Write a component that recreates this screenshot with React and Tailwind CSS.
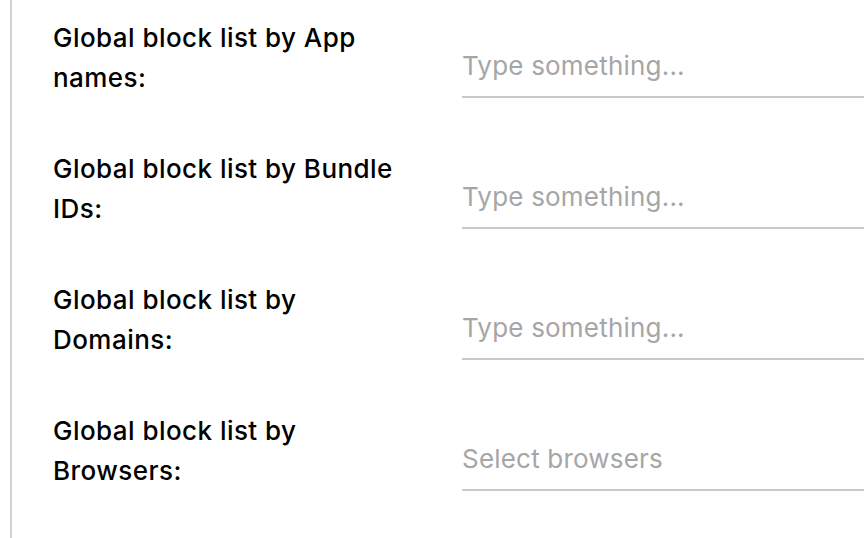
import { useState } from 'react'

const FIELDS = [
  { id: 'app_names', label: 'Global block list by App names:', placeholder: 'Type something...' },
  { id: 'bundle_ids', label: 'Global block list by Bundle IDs:', placeholder: 'Type something...' },
  { id: 'domains', label: 'Global block list by Domains:', placeholder: 'Type something...' },
  { id: 'browsers', label: 'Global block list by Browsers:', placeholder: 'Select browsers' }
]

const App = () => {
  const [values, setValues] = useState({})

  const handleChange = (e) => {
    const { name, value } = e.target
    setValues((prev) => ({ ...prev, [name]: value }))
  }

  return (
    <div className="min-h-screen bg-white overflow-hidden" style={{ fontFamily: 'Inter, "Noto Sans", sans-serif' }}>
      <div className="ml-[10px] border-l-2 border-[#d2d2d2] min-h-[538px] pl-[41px] pt-[18px] flex flex-col gap-[51px]">
        {FIELDS.map((field) => (
          <div key={field.id} className="flex items-end">
            <label htmlFor={field.id} className="w-[352px] shrink-0 text-[26px] leading-[40px] font-medium tracking-[0.45px] text-black">
              {field.label}
            </label>
            <input
              id={field.id}
              name={field.id}
              type="text"
              value={values[field.id] || ''}
              onChange={handleChange}
              placeholder={field.placeholder}
              className="ml-[57px] flex-1 min-w-0 border-b-2 border-[#c9c9c9] pb-[10px] text-[26px] leading-[40px] tracking-[0.2px] text-black placeholder:text-[#a6a6a6] outline-none bg-transparent"
            />
          </div>
        ))}
      </div>
    </div>
  )
}

export default App
